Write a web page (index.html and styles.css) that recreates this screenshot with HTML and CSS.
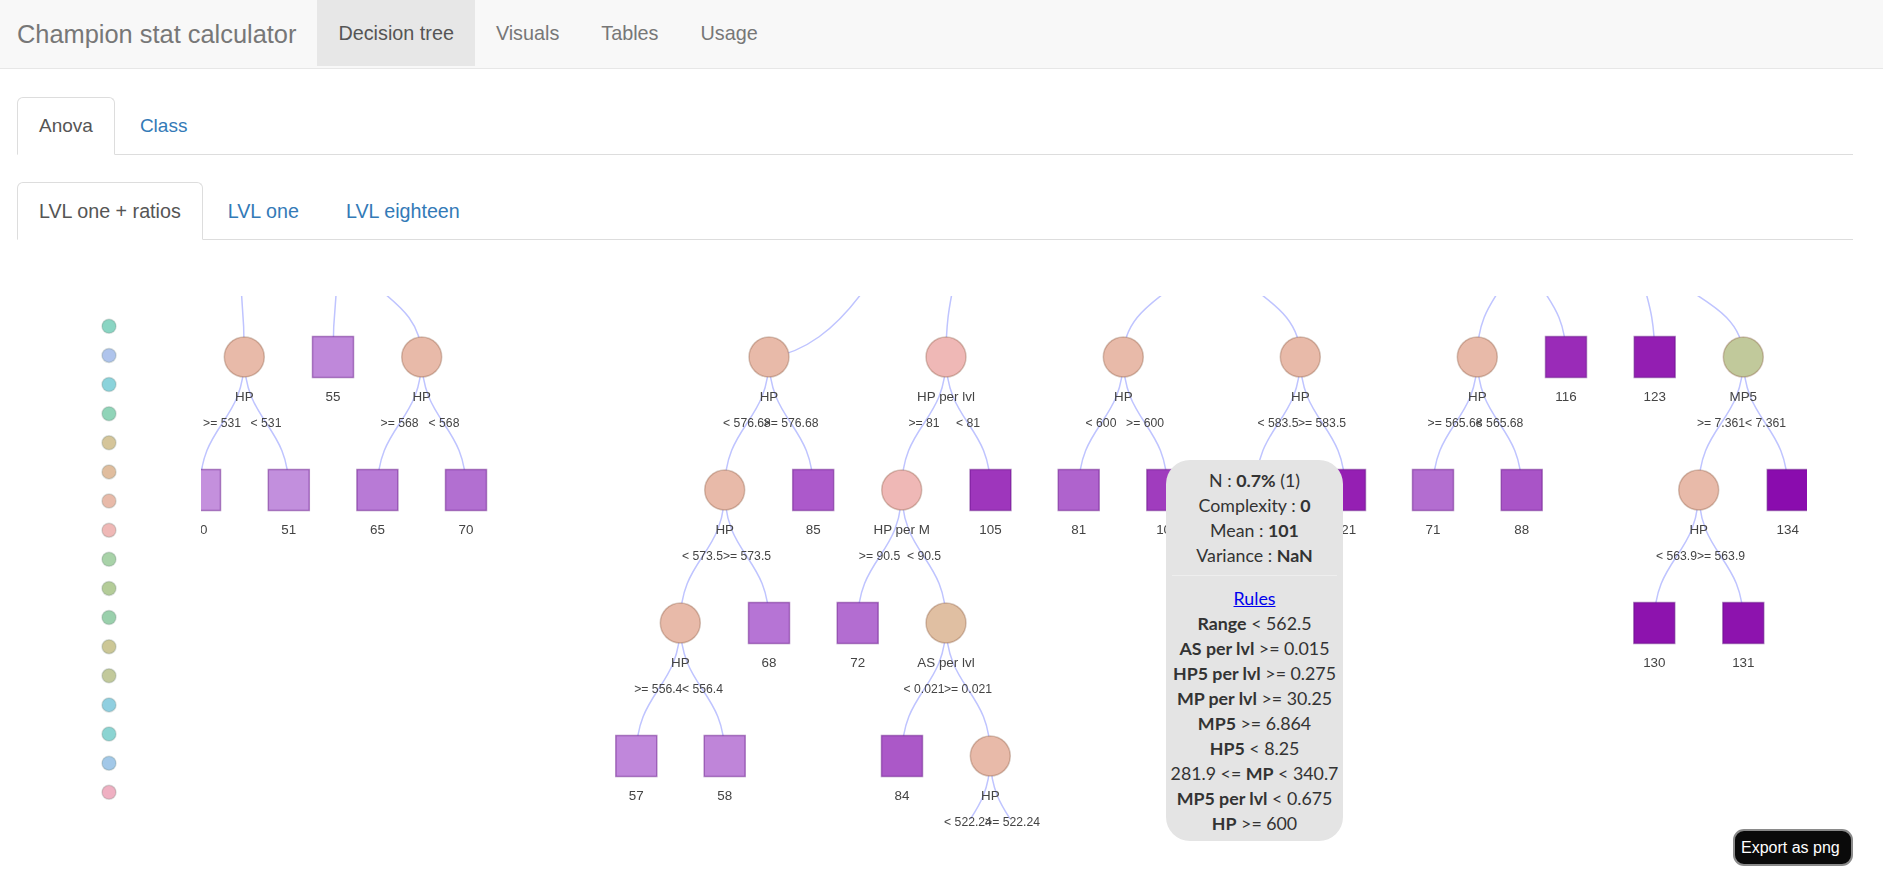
FILE: index.html
```html
<!DOCTYPE html>
<html lang="en">
<head>
  <meta charset="UTF-8">
  <title>Champion stat calculator</title>
  <link rel="stylesheet" href="styles.css">
</head>
<body>
  <nav class="navbar">
    <a class="brand" href="#">Champion stat calculator</a>
    <ul class="nav-links">
      <li><a class="active" href="#">Decision tree</a></li>
      <li><a href="#">Visuals</a></li>
      <li><a href="#">Tables</a></li>
      <li><a href="#">Usage</a></li>
    </ul>
  </nav>

  <div class="main">
    <ul class="tabs">
      <li><a class="active" href="#">Anova</a></li>
      <li><a href="#">Class</a></li>
    </ul>
    <ul class="tabs tabs-inner">
      <li><a class="active" href="#">LVL one + ratios</a></li>
      <li><a href="#">LVL one</a></li>
      <li><a href="#">LVL eighteen</a></li>
    </ul>

    <div class="chart">
      <!-- viewBox uses the same numbers as the page so the nodes are easy to check -->
      <svg class="tree" width="1836" height="639" viewBox="17 240 1836 639">
        <defs>
          <clipPath id="tree-clip"><rect x="201" y="296" width="1606" height="536"/></clipPath>
          <clipPath id="edge-clip"><rect x="201" y="296" width="1606" height="523"/></clipPath>
        </defs>

        <g class="legend">
          <circle cx="109" cy="326.3" r="7" fill="#8ad5c3"/>
          <circle cx="109" cy="355.4" r="7" fill="#afc4ec"/>
          <circle cx="109" cy="384.5" r="7" fill="#8bd3db"/>
          <circle cx="109" cy="413.7" r="7" fill="#90d4b8"/>
          <circle cx="109" cy="442.8" r="7" fill="#d5c59a"/>
          <circle cx="109" cy="471.9" r="7" fill="#e0bd9e"/>
          <circle cx="109" cy="501" r="7" fill="#e8baa9"/>
          <circle cx="109" cy="530.2" r="7" fill="#efb8b6"/>
          <circle cx="109" cy="559.3" r="7" fill="#a8d2a8"/>
          <circle cx="109" cy="588.4" r="7" fill="#b4cc98"/>
          <circle cx="109" cy="617.5" r="7" fill="#9ad0ac"/>
          <circle cx="109" cy="646.7" r="7" fill="#ccc796"/>
          <circle cx="109" cy="675.8" r="7" fill="#c2c99b"/>
          <circle cx="109" cy="704.9" r="7" fill="#90cfe0"/>
          <circle cx="109" cy="734" r="7" fill="#8bd4d2"/>
          <circle cx="109" cy="763.2" r="7" fill="#a2c8e8"/>
          <circle cx="109" cy="792.3" r="7" fill="#efb0c2"/>
        </g>

        <g clip-path="url(#tree-clip)">
          <g class="edges" clip-path="url(#edge-clip)">
            <!-- coming in from the cut off level above -->
            <path d="M238 224C238 290.5 244.3 290.5 244.3 357"/>
            <path d="M340 224C340 290.5 333 290.5 333 357"/>
            <path d="M340 224C340 290.5 421.7 290.5 421.7 357"/>
            <path d="M769 358C805 352 835 330 864 290"/>
            <path d="M959 224C959 290.5 946 290.5 946 357"/>
            <path d="M1212 224C1212 290.5 1123.3 290.5 1123.3 357"/>
            <path d="M1212 224C1212 290.5 1300.3 290.5 1300.3 357"/>
            <path d="M1521 224C1521 290.5 1477.3 290.5 1477.3 357"/>
            <path d="M1521 224C1521 290.5 1566 290.5 1566 357"/>
            <path d="M1636 224C1636 290.5 1654.7 290.5 1654.7 357"/>
            <path d="M1636 224C1636 290.5 1743.3 290.5 1743.3 357"/>
            <!-- first to second row -->
            <path d="M244.3 357C244.3 423.5 200 423.5 200 490"/>
            <path d="M244.3 357C244.3 423.5 288.8 423.5 288.8 490"/>
            <path d="M421.7 357C421.7 423.5 377.4 423.5 377.4 490"/>
            <path d="M421.7 357C421.7 423.5 466 423.5 466 490"/>
            <path d="M769 357C769 423.5 724.7 423.5 724.7 490"/>
            <path d="M769 357C769 423.5 813.2 423.5 813.2 490"/>
            <path d="M946 357C946 423.5 901.7 423.5 901.7 490"/>
            <path d="M946 357C946 423.5 990.5 423.5 990.5 490"/>
            <path d="M1123.3 357C1123.3 423.5 1078.7 423.5 1078.7 490"/>
            <path d="M1123.3 357C1123.3 423.5 1167.3 423.5 1167.3 490"/>
            <path d="M1300.3 357C1300.3 423.5 1256 423.5 1256 490"/>
            <path d="M1300.3 357C1300.3 423.5 1345 423.5 1345 490"/>
            <path d="M1477.3 357C1477.3 423.5 1433 423.5 1433 490"/>
            <path d="M1477.3 357C1477.3 423.5 1521.7 423.5 1521.7 490"/>
            <path d="M1743.3 357C1743.3 423.5 1698.7 423.5 1698.7 490"/>
            <path d="M1743.3 357C1743.3 423.5 1787.7 423.5 1787.7 490"/>
            <!-- second to third row -->
            <path d="M724.7 490C724.7 556.5 680.3 556.5 680.3 623"/>
            <path d="M724.7 490C724.7 556.5 769 556.5 769 623"/>
            <path d="M901.7 490C901.7 556.5 857.7 556.5 857.7 623"/>
            <path d="M901.7 490C901.7 556.5 946 556.5 946 623"/>
            <path d="M1698.7 490C1698.7 556.5 1654.3 556.5 1654.3 623"/>
            <path d="M1698.7 490C1698.7 556.5 1743.3 556.5 1743.3 623"/>
            <!-- third to fourth row -->
            <path d="M680.3 623C680.3 689.5 636.3 689.5 636.3 756"/>
            <path d="M680.3 623C680.3 689.5 724.7 689.5 724.7 756"/>
            <path d="M946 623C946 689.5 902 689.5 902 756"/>
            <path d="M946 623C946 689.5 990.3 689.5 990.3 756"/>
            <path d="M990.3 756C990.3 822.5 946 822.5 946 889"/>
            <path d="M990.3 756C990.3 822.5 1034.6 822.5 1034.6 889"/>
          </g>

          <g class="splits">
            <circle cx="244.3" cy="357" r="20" fill="#e8baa9"/>
            <circle cx="421.7" cy="357" r="20" fill="#e8baa9"/>
            <circle cx="769" cy="357" r="20" fill="#e8baa9"/>
            <circle cx="946" cy="357" r="20" fill="#efb8b6"/>
            <circle cx="1123.3" cy="357" r="20" fill="#e8baa9"/>
            <circle cx="1300.3" cy="357" r="20" fill="#e8baa9"/>
            <circle cx="1477.3" cy="357" r="20" fill="#e8baa9"/>
            <circle cx="1743.3" cy="357" r="20" fill="#c1c99b"/>
            <circle cx="724.7" cy="490" r="20" fill="#e8baa9"/>
            <circle cx="901.7" cy="490" r="20" fill="#efb8b6"/>
            <circle cx="1698.7" cy="490" r="20" fill="#e8baa9"/>
            <circle cx="680.3" cy="623" r="20" fill="#e8baa9"/>
            <circle cx="946" cy="623" r="20" fill="#e0bfa2"/>
            <circle cx="990.3" cy="756" r="20" fill="#e8baa9"/>
          </g>

          <g class="leaves">
            <rect x="312.5" y="336.5" width="41" height="41" fill="#bf88da"/>
            <rect x="1545.5" y="336.5" width="41" height="41" fill="#9a2bb8"/>
            <rect x="1634.2" y="336.5" width="41" height="41" fill="#931eb2"/>
            <rect x="179.5" y="469.5" width="41" height="41" fill="#c490dd"/>
            <rect x="268.3" y="469.5" width="41" height="41" fill="#c28fdd"/>
            <rect x="356.9" y="469.5" width="41" height="41" fill="#b87ad6"/>
            <rect x="445.5" y="469.5" width="41" height="41" fill="#b26fd1"/>
            <rect x="792.7" y="469.5" width="41" height="41" fill="#ac59cb"/>
            <rect x="970" y="469.5" width="41" height="41" fill="#9e36bc"/>
            <rect x="1058.2" y="469.5" width="41" height="41" fill="#af63cd"/>
            <rect x="1146.8" y="469.5" width="41" height="41" fill="#a03cbe"/>
            <rect x="1235.5" y="469.5" width="41" height="41" fill="#a84fc6"/>
            <rect x="1324.5" y="469.5" width="41" height="41" fill="#951fb3"/>
            <rect x="1412.5" y="469.5" width="41" height="41" fill="#b36dd0"/>
            <rect x="1501.2" y="469.5" width="41" height="41" fill="#a954c7"/>
            <rect x="1767.2" y="469.5" width="41" height="41" fill="#8a0cae"/>
            <rect x="748.5" y="602.5" width="41" height="41" fill="#b674d5"/>
            <rect x="837.2" y="602.5" width="41" height="41" fill="#b36dd1"/>
            <rect x="1633.8" y="602.5" width="41" height="41" fill="#8d13ae"/>
            <rect x="1722.8" y="602.5" width="41" height="41" fill="#8d13ae"/>
            <rect x="615.8" y="735.5" width="41" height="41" fill="#c087db"/>
            <rect x="704.2" y="735.5" width="41" height="41" fill="#bf85d9"/>
            <rect x="881.5" y="735.5" width="41" height="41" fill="#ab58c8"/>
          </g>

          <g class="node-labels">
            <text x="244.3" y="400.5">HP</text>
            <text x="333" y="400.5">55</text>
            <text x="421.7" y="400.5">HP</text>
            <text x="769" y="400.5">HP</text>
            <text x="946" y="400.5">HP per lvl</text>
            <text x="1123.3" y="400.5">HP</text>
            <text x="1300.3" y="400.5">HP</text>
            <text x="1477.3" y="400.5">HP</text>
            <text x="1566" y="400.5">116</text>
            <text x="1654.7" y="400.5">123</text>
            <text x="1743.3" y="400.5">MP5</text>

            <text x="200" y="533.5">50</text>
            <text x="288.8" y="533.5">51</text>
            <text x="377.4" y="533.5">65</text>
            <text x="466" y="533.5">70</text>
            <text x="724.7" y="533.5">HP</text>
            <text x="813.2" y="533.5">85</text>
            <text x="901.7" y="533.5">HP per M</text>
            <text x="990.5" y="533.5">105</text>
            <text x="1078.7" y="533.5">81</text>
            <text x="1167.3" y="533.5">101</text>
            <text x="1345" y="533.5">121</text>
            <text x="1433" y="533.5">71</text>
            <text x="1521.7" y="533.5">88</text>
            <text x="1698.7" y="533.5">HP</text>
            <text x="1787.7" y="533.5">134</text>

            <text x="680.3" y="666.5">HP</text>
            <text x="769" y="666.5">68</text>
            <text x="857.7" y="666.5">72</text>
            <text x="946" y="666.5">AS per lvl</text>
            <text x="1654.3" y="666.5">130</text>
            <text x="1743.3" y="666.5">131</text>

            <text x="636.3" y="799.5">57</text>
            <text x="724.7" y="799.5">58</text>
            <text x="902" y="799.5">84</text>
            <text x="990.3" y="799.5">HP</text>
          </g>

          <g class="edge-labels">
            <text x="222" y="427">&gt;= 531</text>
            <text x="266" y="427">&lt; 531</text>
            <text x="399.5" y="427">&gt;= 568</text>
            <text x="444" y="427">&lt; 568</text>
            <text x="747" y="427">&lt; 576.68</text>
            <text x="791" y="427">&gt;= 576.68</text>
            <text x="924" y="427">&gt;= 81</text>
            <text x="968" y="427">&lt; 81</text>
            <text x="1101" y="427">&lt; 600</text>
            <text x="1145" y="427">&gt;= 600</text>
            <text x="1278" y="427">&lt; 583.5</text>
            <text x="1322" y="427">&gt;= 583.5</text>
            <text x="1455" y="427">&gt;= 565.68</text>
            <text x="1499.5" y="427">&lt; 565.68</text>
            <text x="1721" y="427">&gt;= 7.361</text>
            <text x="1765.5" y="427">&lt; 7.361</text>

            <text x="702.5" y="560">&lt; 573.5</text>
            <text x="747" y="560">&gt;= 573.5</text>
            <text x="879.5" y="560">&gt;= 90.5</text>
            <text x="924" y="560">&lt; 90.5</text>
            <text x="1676.5" y="560">&lt; 563.9</text>
            <text x="1721" y="560">&gt;= 563.9</text>

            <text x="658.3" y="693">&gt;= 556.4</text>
            <text x="702.5" y="693">&lt; 556.4</text>
            <text x="924" y="693">&lt; 0.021</text>
            <text x="968" y="693">&gt;= 0.021</text>

            <text x="968" y="826">&lt; 522.24</text>
            <text x="1012.5" y="826">&gt;= 522.24</text>
          </g>
        </g>
      </svg>

      <div class="tooltip">
        <div>N : <b>0.7%</b> (1)</div>
        <div>Complexity : <b>0</b></div>
        <div>Mean : <b>101</b></div>
        <div>Variance : <b>NaN</b></div>
        <hr>
        <div><a href="#">Rules</a></div>
        <div><b>Range</b> &lt; 562.5</div>
        <div><b>AS per lvl</b> &gt;= 0.015</div>
        <div><b>HP5 per lvl</b> &gt;= 0.275</div>
        <div><b>MP per lvl</b> &gt;= 30.25</div>
        <div><b>MP5</b> &gt;= 6.864</div>
        <div><b>HP5</b> &lt; 8.25</div>
        <div>281.9 &lt;= <b>MP</b> &lt; 340.7</div>
        <div><b>MP5 per lvl</b> &lt; 0.675</div>
        <div><b>HP</b> &gt;= 600</div>
      </div>

      <button class="export" type="button">Export as png</button>
    </div>
  </div>
</body>
</html>
```

FILE: styles.css
```css
* {
  box-sizing: border-box;
}

html, body {
  height: 100%;
  overflow: hidden;
}

body {
  margin: 0;
  background-color: #fff;
  font-family: "Liberation Sans", Arial, sans-serif;
  font-size: 19.8px;
  line-height: 28px;
  color: #555;
}

a {
  text-decoration: none;
}

ul {
  list-style: none;
  margin: 0;
  padding: 0;
}

.navbar {
  display: flex;
  height: 69px;
  background-color: #f8f8f8;
  border-bottom: 1px solid #e7e7e7;
}

.brand {
  padding: 0 21px 0 17px;
  font-size: 25.4px;
  line-height: 68px;
  color: #777;
}

.nav-links {
  display: flex;

  a {
    display: block;
    padding: 0 21px;
    line-height: 66px;
    color: #777;
  }

  a.active {
    background-color: #e7e7e7;
    color: #555;
  }
}

.main {
  padding: 28px 30px 0 17px;
}

.tabs {
  display: flex;
  border-bottom: 1px solid #ddd;
  font-size: 19px;

  li {
    margin-bottom: -1px;
    margin-right: 3px;
  }

  a {
    display: block;
    padding: 14px 21px;
    border: 1px solid transparent;
    border-radius: 6px 6px 0 0;
    color: #337ab7;
  }

  a.active {
    background-color: #fff;
    border-color: #ddd #ddd #fff;
    color: #555;
  }
}

.tabs-inner {
  margin-top: 27px;
  font-size: 19.7px;
}

.chart {
  position: relative;
  height: 639px;
}

.tree {
  display: block;
  filter: blur(0.45px);

  text {
    font-family: "Liberation Sans", Arial, sans-serif;
    text-anchor: middle;
    fill: #444;
  }
}

.legend circle {
  stroke: #6b7f78;
  stroke-opacity: 0.25;
  stroke-width: 1.5;
}

.edges path {
  fill: none;
  stroke: #bfc4ff;
  stroke-width: 1.5;
}

.splits circle {
  stroke: #7a4a30;
  stroke-opacity: 0.3;
  stroke-width: 1.5;
}

.leaves rect {
  stroke: #5e0a80;
  stroke-opacity: 0.45;
  stroke-width: 1.5;
}

.node-labels text {
  font-size: 13.4px;
}

.edge-labels text {
  font-size: 12.2px;
}

.tooltip {
  position: absolute;
  left: 1149px;
  top: 220px;
  width: 177px;
  height: 381px;
  padding: 8px 4px 0;
  background-color: #e4e4e4;
  border-radius: 24px;
  font-family: "Comic Sans MS", "Lato", sans-serif;
  font-size: 17.8px;
  line-height: 25px;
  text-align: center;
  color: #333;

  hr {
    margin: 7px 2px 10px;
    border: 0;
    border-top: 1px solid #eee;
  }

  a {
    color: #00e;
    text-decoration: underline;
  }
}

.export {
  position: absolute;
  right: 0;
  top: 589px;
  width: 120px;
  height: 37px;
  padding: 0 0 0 6px;
  background-color: #0a0a0a;
  border: 2px solid #8a8a8a;
  border-radius: 11px;
  font-family: "Liberation Sans", Arial, sans-serif;
  font-size: 16px;
  text-align: left;
  color: #fff;
}
```
